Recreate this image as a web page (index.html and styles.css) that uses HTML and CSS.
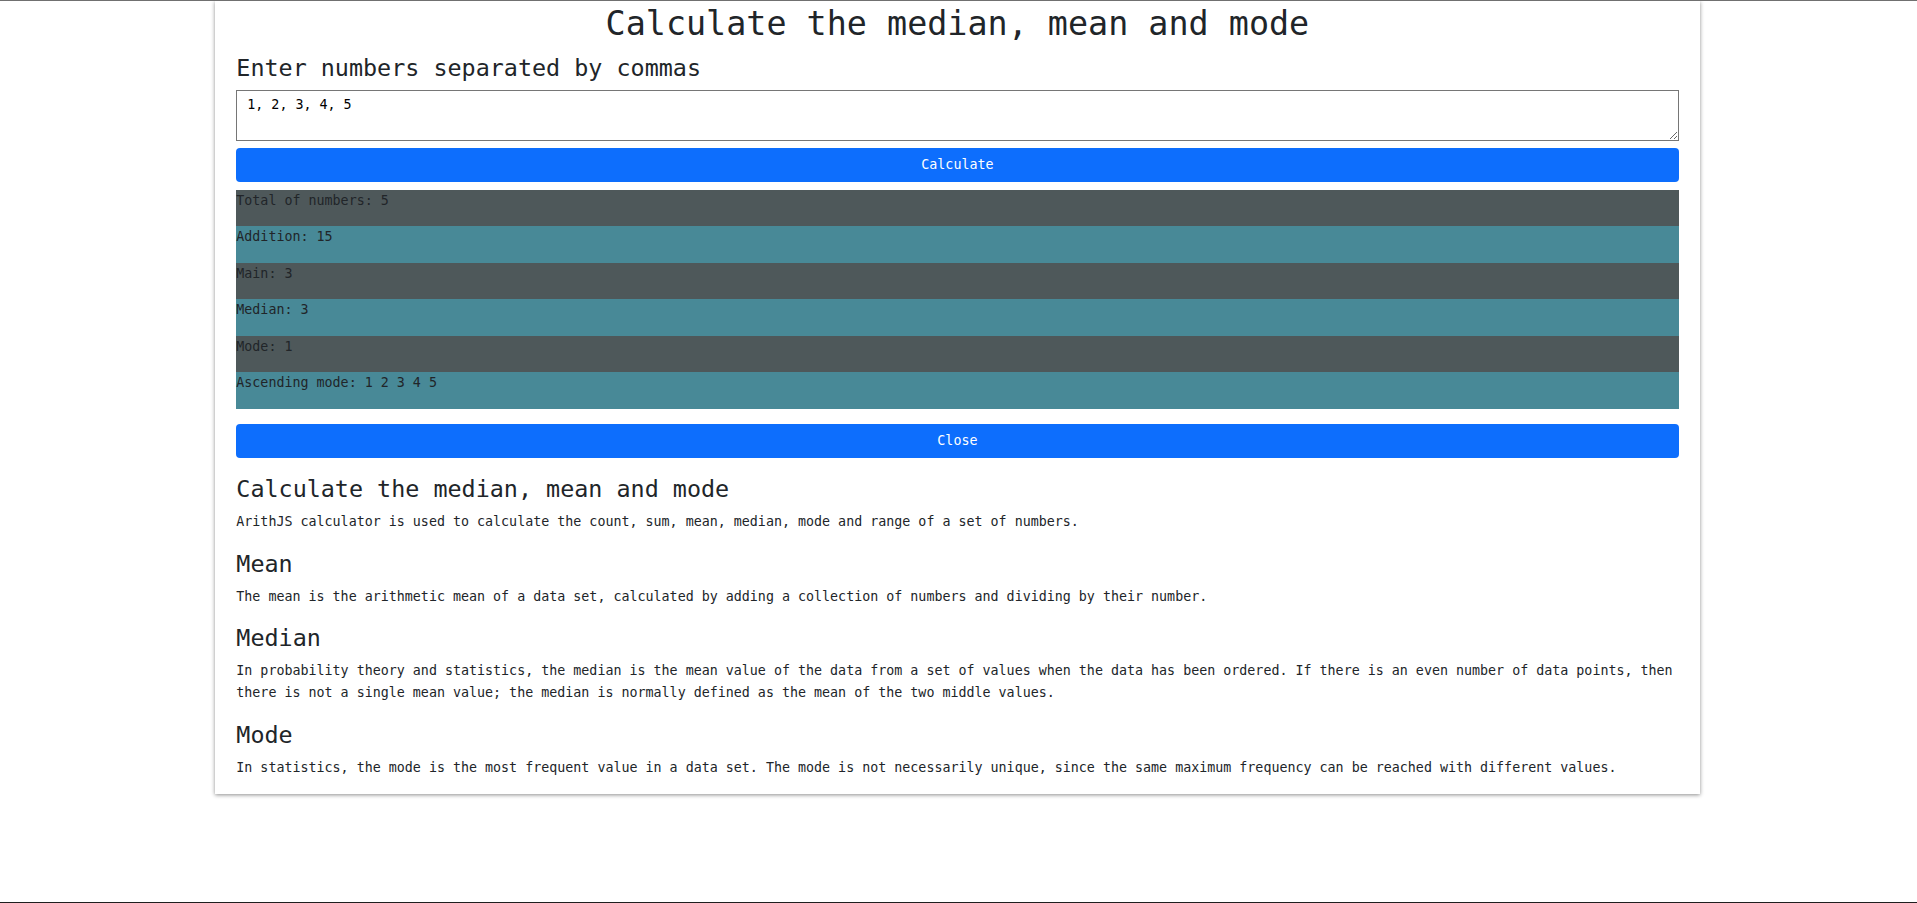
FILE: index.html
```html
<!DOCTYPE html>
<html lang="en">
<head>
<meta charset="utf-8">
<title>Calculate the median, mean and mode</title>
<link rel="stylesheet" href="styles.css">
</head>
<body>
<main class="card">
  <h1 class="title">Calculate the median, mean and mode</h1>
  <form class="calc">
    <h2 class="heading input-label">Enter numbers separated by commas</h2>
    <textarea class="numbers">1, 2, 3, 4, 5</textarea>
    <button type="button" class="btn btn-calc">Calculate</button>
    <div class="results">
      <div class="row row-dark">Total of numbers: 5</div>
      <div class="row row-teal">Addition: 15</div>
      <div class="row row-dark">Main: 3</div>
      <div class="row row-teal">Median: 3</div>
      <div class="row row-dark">Mode: 1</div>
      <div class="row row-teal">Ascending mode: 1 2 3 4 5</div>
    </div>
    <button type="button" class="btn btn-close">Close</button>
  </form>
  <section class="info">
    <h2 class="heading">Calculate the median, mean and mode</h2>
    <p class="text">ArithJS calculator is used to calculate the count, sum, mean, median, mode and range of a set of numbers.</p>
    <h2 class="heading">Mean</h2>
    <p class="text">The mean is the arithmetic mean of a data set, calculated by adding a collection of numbers and dividing by their number.</p>
    <h2 class="heading">Median</h2>
    <p class="text">In probability theory and statistics, the median is the mean value of the data from a set of values when the data has been ordered. If there is an even number of data points, then there is not a single mean value; the median is normally defined as the mean of the two middle values.</p>
    <h2 class="heading">Mode</h2>
    <p class="text text-last">In statistics, the mode is the most frequent value in a data set. The mode is not necessarily unique, since the same maximum frequency can be reached with different values.</p>
  </section>
</main>
</body>
</html>
```

FILE: styles.css
```css
html, body {
  margin: 0;
  padding: 0;
}

body {
  background: #ffffff;
  color: #212529;
  font-family: "DejaVu Sans Mono", "Liberation Mono", monospace;
  font-size: 13.33px;
  line-height: 22px;
  min-height: 100vh;
  box-sizing: border-box;
  border-top: 1px solid #707070;
  border-bottom: 1px solid #1f1f1f;
}

.card {
  width: 1485px;
  box-sizing: border-box;
  margin: 0 0 0 calc((100% - 1487px) / 2);
  padding: 2.5px 21.5px 0 21.3px;
  background: #ffffff;
  box-shadow: 0 1px 4px rgba(0, 0, 0, 0.45);
  display: flow-root;
}

.title {
  margin: 0 0 10.3px;
  font-size: 33.4px;
  line-height: 1.2;
  font-weight: 400;
  text-align: center;
  color: #212529;
}

.heading {
  margin: 0 0 8px;
  font-size: 23.4px;
  line-height: 1.2;
  font-weight: 400;
  color: #212529;
}

.calc {
  display: flex;
  flex-direction: column;
}

.input-label {
  margin-bottom: 8.3px;
}

.numbers {
  display: block;
  width: 100%;
  height: 51px;
  box-sizing: border-box;
  margin: 0;
  padding: 6px 10px;
  border: 1px solid #767676;
  border-radius: 0;
  font-family: "DejaVu Sans Mono", monospace;
  font-size: 13.33px;
  line-height: normal;
  color: #000000;
  background: #ffffff;
  resize: vertical;
}

.btn {
  display: block;
  width: 100%;
  box-sizing: border-box;
  border: 0;
  border-radius: 4px;
  padding: 6px 12px;
  background: #0d6efd;
  color: #ffffff;
  font-family: "DejaVu Sans Mono", monospace;
  font-size: 13.33px;
  line-height: 22px;
  font-weight: 400;
  text-align: center;
}

.btn-calc {
  margin-top: 7px;
  height: 34px;
}

.results {
  margin-top: 7.7px;
}

.row {
  line-height: 22px;
  padding-bottom: 14.45px;
  color: #212529;
}

.row-dark {
  background: #4e585a;
}

.row-teal {
  background: #488997;
}

.btn-close {
  margin-top: 15.3px;
  height: 34.5px;
}

.info {
  margin-top: 16.7px;
}

.text {
  margin: 0 0 16.6px;
  line-height: 22px;
}

.text-last {
  margin-bottom: 14.6px;
}
```
